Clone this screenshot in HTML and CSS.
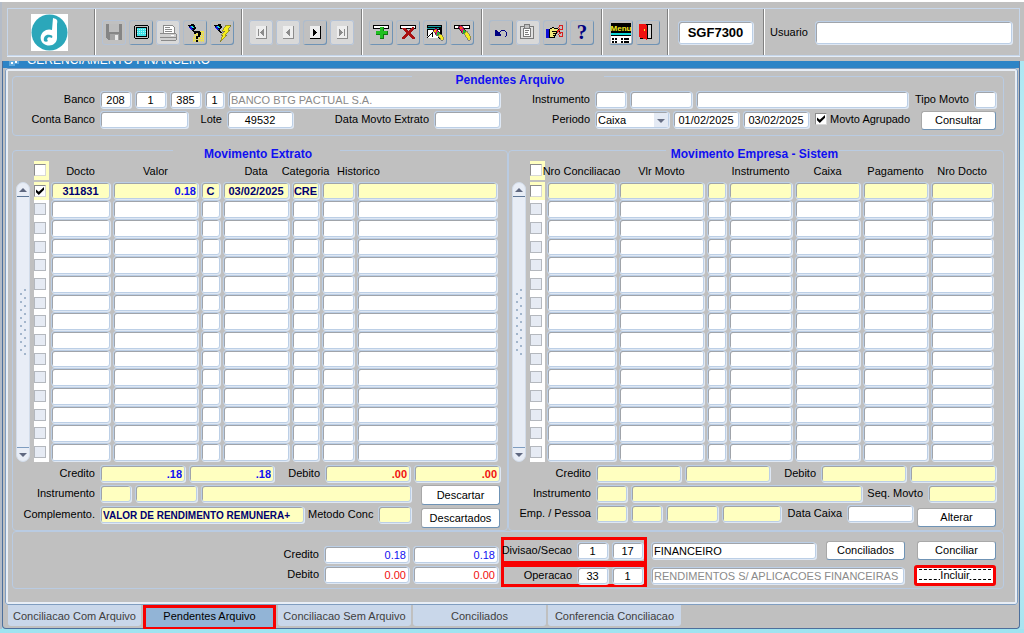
FILE: index.html
```html
<!DOCTYPE html>
<html lang="pt-BR">
<head>
    <meta charset="utf-8">
    <title>SGF7300 - Gerenciamento Financeiro</title>
    <link rel="stylesheet" href="styles.css">
</head>
<body>
    <header class="toolbar">
        <div class="toolbar-frame">
            <div class="section logo-section">
                <svg class="logo" viewBox="0 0 37 37">
                    <rect width="37" height="37" fill="#fff"/>
                    <circle cx="18.5" cy="18.5" r="18" fill="#2ba7ba"/>
                    <path d="M22 4 C26 5 27 6 26 10 V24 C26 29 21 33 15 31 C9 29 8 22 12 18 C15 15 19 15 21 16 Z" fill="#fff"/>
                    <path d="M19 21 C15 20 12 23 13 27 C14 28 16 28 17 27 C15 25 17 22 21 24 C22 22 21 21 19 21 Z" fill="#2ba7ba"/>
                </svg>
            </div>

            <div class="section">
                <button class="tool off" aria-label="Salvar">
                    <svg viewBox="0 0 24 24">
                        <path d="M4 4H20V20H6L4 18Z" fill="#858585"/>
                        <path d="M7 4H17V12H7Z" fill="#bdbdbd"/>
                        <path d="M8 14H17V20H8Z" fill="#a4a4a4"/>
                        <path d="M13 15H16V20H13Z" fill="#e8e8e8"/>
                    </svg>
                </button>
                <button class="tool" aria-label="Tela">
                    <svg viewBox="0 0 24 24">
                        <path d="M5 6H6V5H19V6H20V18H19V19H6V18H5Z" fill="#000"/>
                        <path d="M6 6H19V18H6Z" fill="#c0c0c0"/>
                        <path d="M7 7H18V17H7Z" fill="#000"/>
                        <path d="M8 8H17V16H8Z" fill="#3fe0e6"/>
                        <path d="M8 9.5H17M8 11.5H17M8 13.5H17" stroke="#b0f4f6" stroke-dasharray="1 1"/>
                    </svg>
                </button>
                <button class="tool off lit" aria-label="Imprimir">
                    <svg viewBox="0 0 24 24">
                        <path d="M7 5H16L18 7V13H7Z" fill="#fff" stroke="#8a8a8a"/>
                        <path d="M9 7.5H14M9 9.5H16M9 11.5H16" stroke="#8a8a8a"/>
                        <path d="M4 14H20V20H4Z" fill="#d0d0d0"/>
                        <path d="M4 13.5H20M4 17.5H20M5 20.5H20M20.5 14V20" stroke="#8a8a8a"/>
                        <path d="M15 15H18V16H15Z" fill="#fff"/>
                    </svg>
                </button>
                <button class="tool" aria-label="Consulta">
                    <svg viewBox="0 0 24 24">
                        <path d="M11 11H21V22H10V17H11Z" fill="#ece050"/>
                        <path d="M11 13H21M11 15H21M11 17H21M11 19H21M11 21H21" stroke="#c0c0c0" stroke-dasharray="1 1"/>
                        <path d="M5 5L11 4L13 8L11 11L13 13H11L8 10Z" fill="#000"/>
                        <path d="M5 7L8 6L10 10L8 10Z" fill="#1212e0"/>
                        <path d="M8 6H10L11 8H9Z" fill="#20e0e0"/>
                        <path d="M12 11H17V12H18V15H17V17H15V19H13V16H15V13H13V14H11V12H12Z" fill="#000"/>
                        <path d="M13 20H15V22H13Z" fill="#000"/>
                    </svg>
                </button>
                <button class="tool" aria-label="Executar consulta">
                    <svg viewBox="0 0 24 24">
                        <path d="M4 5L11 4L12 7L10 10L12 13H10L7 10Z" fill="#000"/>
                        <path d="M4 7L7 6L9 10L7 10Z" fill="#1212e0"/>
                        <path d="M7 6H9L10 8H8Z" fill="#20e0e0"/>
                        <path d="M16 5H21L18 10H20L15 15H17L10 22L13 15H11L15 11H12Z" fill="#f6ee1c" stroke="#6b6420" stroke-width=".6"/>
                    </svg>
                </button>
            </div>

            <div class="section">
                <button class="tool off lit" aria-label="Primeiro">
                    <svg viewBox="0 0 24 24">
                        <path d="M7 6H18V19H7Z" fill="#eee"/><path d="M7 18.5H18M17.5 6V19" stroke="#8c8c8c"/>
                        <path d="M9 9H10V16H9ZM15 9V16H14L11 12.5L14 9Z" fill="#8c8c8c"/>
                    </svg>
                </button>
                <button class="tool off lit" aria-label="Anterior">
                    <svg viewBox="0 0 24 24">
                        <path d="M7 6H18V19H7Z" fill="#eee"/><path d="M7 18.5H18M17.5 6V19" stroke="#8c8c8c"/>
                        <path d="M14 9V16H13L10 12.5L13 9Z" fill="#8c8c8c"/>
                    </svg>
                </button>
                <button class="tool" aria-label="Proximo">
                    <svg viewBox="0 0 24 24">
                        <path d="M7 6H18V19H7Z" fill="#eee"/><path d="M7 18.5H18M17.5 6V19" stroke="#000"/>
                        <path d="M10 9V16H11L14 12.5L11 9Z" fill="#000"/>
                    </svg>
                </button>
                <button class="tool off lit" aria-label="Ultimo">
                    <svg viewBox="0 0 24 24">
                        <path d="M7 6H18V19H7Z" fill="#eee"/><path d="M7 18.5H18M17.5 6V19" stroke="#8c8c8c"/>
                        <path d="M9 9V16H10L13 12.5L10 9ZM14 9H15V16H14Z" fill="#8c8c8c"/>
                    </svg>
                </button>
            </div>

            <div class="section">
                <button class="tool" aria-label="Inserir">
                    <svg viewBox="0 0 24 24">
                        <path d="M4.5 5.5H19.5V8.5H4.5Z" fill="#fff" stroke="#000"/>
                        <path d="M11 7H15V11H19V15H15V19H11V15H7V11H11Z" fill="#107a10"/>
                        <path d="M11 7H14V11H18V14H14V18H11V14H7V11H11Z" fill="#1fc01f"/>
                    </svg>
                </button>
                <button class="tool" aria-label="Remover">
                    <svg viewBox="0 0 24 24">
                        <path d="M4.5 5.5H19.5V8.5H4.5Z" fill="#fff" stroke="#000"/>
                        <path d="M6 8H9L12 11L16 7H18V9L14 13L19 18V19H16L12 15L8 19H6V17L10 13L6 9Z" fill="#a81010"/>
                    </svg>
                </button>
                <button class="tool" aria-label="Limpar bloco">
                    <svg viewBox="0 0 24 24">
                        <path d="M4 5H19V16H4Z" fill="#000"/>
                        <path d="M5 6H18V7H5ZM4 8H16V9H4Z" fill="#1a9aa0"/>
                        <path d="M5 10H17V18H5Z" fill="#fff"/>
                        <path d="M4 18L9 13V17M15 17L18 19" fill="none" stroke="#000"/>
                        <path d="M10 10L13 8L17 13L14 16Z" fill="#e0206a" stroke="#000" stroke-width=".6"/>
                        <path d="M11 10H13V12H11Z" fill="#ffb000"/>
                        <path d="M14 12L17 13L14 16Z" fill="#18c030"/>
                        <path d="M15 15L18 14L21 18L20 20H18Z" fill="#f4ec20" stroke="#555" stroke-width=".6"/>
                    </svg>
                </button>
                <button class="tool" aria-label="Limpar registro">
                    <svg viewBox="0 0 24 24">
                        <path d="M4.5 5.5H19.5V8.5H4.5Z" fill="#fff" stroke="#000"/>
                        <path d="M8 7L11 5L16 11L13 14Z" fill="#e0206a" stroke="#000" stroke-width=".6"/>
                        <path d="M10 7H12V9H10Z" fill="#ff5010"/>
                        <path d="M13 10L16 11L13 14Z" fill="#18c030"/>
                        <path d="M14 13L17 11L21 17L20 20H18Z" fill="#f4ec20" stroke="#555" stroke-width=".6"/>
                    </svg>
                </button>
            </div>

            <div class="section">
                <button class="tool" aria-label="Desfazer">
                    <svg viewBox="0 0 24 24">
                        <path d="M6 10H7L9 12L12 15V16H6Z" fill="#000080"/>
                        <path d="M9 13.5L12.5 10.5H15.5L17.5 12.5V15.5L16 17" fill="none" stroke="#000080"/>
                    </svg>
                </button>
                <button class="tool off lit" aria-label="Colar">
                    <svg viewBox="0 0 24 24">
                        <path d="M4.5 6.5H17.5V18.5H4.5Z" fill="#e0e0e0" stroke="#7c7c7c"/>
                        <path d="M8.5 4.5H13.5V8.5H8.5Z" fill="#c0c0c0" stroke="#7c7c7c"/>
                        <path d="M7.5 8.5H14.5V16.5H7.5Z" fill="#fff" stroke="#7c7c7c"/>
                        <path d="M9 10.5H13M9 12.5H12M9 14.5H13" stroke="#7c7c7c"/>
                    </svg>
                </button>
                <button class="tool" aria-label="Recortar">
                    <svg viewBox="0 0 24 24">
                        <path d="M3 9H6V18H3Z" fill="#1010d8"/>
                        <path d="M6.5 9.5L9.5 7.500L16.500 9.500V11.5H13.5V13.5H12.5V15.5H11.5V17.5H6.5Z" fill="#f2e87a" stroke="#000"/>
                        <path d="M9 11.5H14M10 13.5H13M10 15.5H12" stroke="#000"/>
                        <path d="M14 12.5L18 9M14 10.5L18 14" stroke="#d82020"/>
                        <circle cx="18" cy="7.5" r="2" fill="none" stroke="#d82020"/>
                        <circle cx="18" cy="14.5" r="2" fill="none" stroke="#d82020"/>
                    </svg>
                </button>
                <button class="tool" aria-label="Ajuda">
                    <svg viewBox="0 0 24 24"><text class="help" x="12" y="19" text-anchor="middle">?</text></svg>
                </button>
            </div>

            <div class="section">
                <button class="tool" aria-label="Menu">
                    <svg viewBox="0 0 24 24">
                        <path d="M2 3H22V12H2Z" fill="#000"/>
                        <path d="M2 12H22V23H2Z" fill="#fff"/>
                        <path d="M2 13H22V15H2Z" fill="#10d8d8"/>
                        <path d="M2 12.5H22M2 15.5H22" stroke="#000"/>
                        <path d="M3 18.5H9M3 21.5H9" stroke="#000" stroke-width="2" stroke-dasharray="2 1"/>
                        <path d="M12 18.5H14M15 18.500H20M12 21.5H14M15 21.5H20" stroke="#000" stroke-width="2"/>
                        <text class="menu" x="12" y="11" text-anchor="middle">Menu</text>
                    </svg>
                </button>
                <button class="tool" aria-label="Sair">
                    <svg viewBox="0 0 24 24">
                        <path d="M4.5 4.5H15.5V18.5H4.5Z" fill="#d8d8d8" stroke="#000"/>
                        <path d="M3 4H10L11 6V20L3 17Z" fill="#f01010"/>
                        <path d="M11.5 5V19" stroke="#000"/>
                        <path d="M8 9H9V11H8Z" fill="#fff020"/>
                    </svg>
                </button>
            </div>

            <div class="section program">
                <input class="program-code" value="SGF7300" aria-label="Programa">
            </div>

            <div class="section user">
                <label for="usuario">Usuario</label>
                <input class="user-name" id="usuario">
            </div>
        </div>
    </header>

    <main class="window">
        <div class="titlebar">
            <svg class="title-icon" viewBox="0 0 12 7"><path d="M1 0H11V3H7V5H1Z" fill="#5fa8dc"/><path d="M3 1H5V3H3ZM7 0H9V2H7Z" fill="#fff"/></svg>
            <h1>GERENCIAMENTO FINANCEIRO</h1>
        </div>

        <div class="canvas">
            <fieldset class="filters">
                <legend>Pendentes Arquivo</legend>
                <div class="half left">
                    <div class="row">
                        <label class="w83" for="banco">Banco</label>
                        <input class="w31 center" id="banco" value="208">
                        <input class="w31 center" value="1" aria-label="Agencia">
                        <input class="w31 center" value="385" aria-label="Conta">
                        <input class="w19 center" value="1" aria-label="Digito">
                        <input class="grow faded" value="BANCO BTG PACTUAL S.A." aria-label="Nome do banco">
                    </div>
                    <div class="row">
                        <label class="w83" for="conta-banco">Conta Banco</label>
                        <input class="w88" id="conta-banco">
                        <label class="w31" for="lote">Lote</label>
                        <input class="w66 center" id="lote" value="49532">
                        <label class="grow" for="data-extrato">Data Movto Extrato</label>
                        <input class="w66" id="data-extrato">
                    </div>
                </div>
                <div class="half right">
                    <div class="row">
                        <label class="w83" for="instrumento">Instrumento</label>
                        <input class="w31" id="instrumento">
                        <input class="w62" aria-label="Sigla do instrumento">
                        <input class="grow" aria-label="Nome do instrumento">
                        <label class="w58" for="tipo">Tipo Movto</label>
                        <input class="w22" id="tipo">
                    </div>
                    <div class="row">
                        <label class="w83" for="periodo">Periodo</label>
                        <div class="select">
                            <select id="periodo"><option>Caixa</option></select>
                        </div>
                        <input class="w66 center" value="01/02/2025" aria-label="Data inicial">
                        <input class="w66 center" value="03/02/2025" aria-label="Data final">
                        <label class="check-label"><input type="checkbox" checked>Movto Agrupado</label>
                        <button class="btn narrow">Consultar</button>
                    </div>
                </div>
            </fieldset>

            <div class="movements">
                <fieldset class="movement extrato">
                    <legend>Movimento Extrato</legend>
                    <div class="grid-area">
                        <div class="scrollbar"><span class="arrow up"></span><span class="grip"></span><span class="arrow down"></span></div>
                        <table>
                            <colgroup><col class="w17"><col class="w62"><col class="w88"><col class="w22"><col class="w69"><col class="w30"><col class="w35"><col></colgroup>
                            <thead>
                                <tr>
                                    <th class="pick"><input type="checkbox" aria-label="Marcar todos"></th>
                                    <th><span>Docto</span></th>
                                    <th><span>Valor</span></th>
                                    <th></th>
                                    <th><span>Data</span></th>
                                    <th><span>Categoria</span></th>
                                    <th colspan="2" class="start"><span>Historico</span></th>
                                </tr>
                            </thead>
                            <tbody id="extrato"></tbody>
                        </table>
                    </div>
                    <div class="details">
                        <div class="row">
                            <label class="w83" for="cred">Credito</label>
                            <input class="w85 yellow num blue" id="cred" value=".18">
                            <input class="w85 yellow num blue" value=".18" aria-label="Credito total">
                            <label class="w43" for="deb">Debito</label>
                            <input class="w85 yellow num red" id="deb" value=".00">
                            <input class="grow yellow num red" value=".00" aria-label="Debito total">
                        </div>
                        <div class="with-buttons">
                            <div class="stack">
                                <div class="row">
                                    <label class="w83" for="instr-ext">Instrumento</label>
                                    <input class="w31 yellow" id="instr-ext">
                                    <input class="w62 yellow" aria-label="Sigla">
                                    <input class="grow yellow" aria-label="Descricao">
                                </div>
                                <div class="row">
                                    <label class="w83" for="compl">Complemento.</label>
                                    <input class="w204 yellow complement" id="compl" value="VALOR DE RENDIMENTO REMUNERA+">
                                    <label class="w66" for="metodo">Metodo Conc</label>
                                    <input class="grow yellow" id="metodo">
                                </div>
                            </div>
                            <div class="buttons">
                                <button class="btn">Descartar</button>
                                <button class="btn">Descartados</button>
                            </div>
                        </div>
                    </div>
                </fieldset>

                <fieldset class="movement empresa">
                    <legend>Movimento Empresa - Sistem</legend>
                    <div class="grid-area">
                        <div class="scrollbar"><span class="arrow up"></span><span class="grip"></span><span class="arrow down"></span></div>
                        <table>
                            <colgroup><col class="w17"><col class="w72"><col class="w88"><col class="w22"><col class="w66"><col class="w68"><col class="w68"><col></colgroup>
                            <thead>
                                <tr>
                                    <th class="pick"><input type="checkbox" aria-label="Marcar todos"></th>
                                    <th><span>Nro Conciliacao</span></th>
                                    <th><span>Vlr Movto</span></th>
                                    <th></th>
                                    <th><span>Instrumento</span></th>
                                    <th><span>Caixa</span></th>
                                    <th><span>Pagamento</span></th>
                                    <th><span>Nro Docto</span></th>
                                </tr>
                            </thead>
                            <tbody id="empresa"></tbody>
                        </table>
                    </div>
                    <div class="details">
                        <div class="row">
                            <label class="w83" for="cred-emp">Credito</label>
                            <input class="w85 yellow" id="cred-emp">
                            <input class="w85 yellow" aria-label="Credito total">
                            <label class="w43" for="deb-emp">Debito</label>
                            <input class="w85 yellow" id="deb-emp">
                            <input class="grow yellow" aria-label="Debito total">
                        </div>
                        <div class="row">
                            <label class="w83" for="instr-emp">Instrumento</label>
                            <input class="w31 yellow" id="instr-emp">
                            <input class="grow yellow" aria-label="Descricao">
                            <label class="w58" for="seq">Seq. Movto</label>
                            <input class="w68 yellow" id="seq">
                        </div>
                        <div class="row">
                            <label class="w83" for="emp">Emp. / Pessoa</label>
                            <input class="w31 yellow" id="emp">
                            <input class="w31 yellow" aria-label="Filial">
                            <input class="w52 yellow" aria-label="Pessoa">
                            <input class="grow yellow" aria-label="Nome">
                            <label class="w58" for="data-caixa">Data Caixa</label>
                            <input class="w66" id="data-caixa">
                            <button class="btn low">Alterar</button>
                        </div>
                    </div>
                </fieldset>
            </div>

            <fieldset class="footer-box">
                <div class="totals">
                    <div class="row">
                        <label class="grow" for="tot-cred">Credito</label>
                        <input class="w85 num plain blue" id="tot-cred" value="0.18">
                        <input class="w85 num plain blue" value="0.18" aria-label="Credito geral">
                    </div>
                    <div class="row">
                        <label class="grow" for="tot-deb">Debito</label>
                        <input class="w85 num plain red" id="tot-deb" value="0.00">
                        <input class="w85 num plain red" value="0.00" aria-label="Debito geral">
                    </div>
                </div>
                <div class="operation">
                    <div class="op-row first">
                        <div class="marked">
                            <label for="divisao">Divisao/Secao</label>
                            <input class="w31 center" id="divisao" value="1">
                            <input class="w31 center" value="17" aria-label="Secao">
                        </div>
                        <input class="grow" value="FINANCEIRO" aria-label="Nome da secao">
                        <button class="btn spaced">Conciliados</button>
                        <button class="btn">Conciliar</button>
                    </div>
                    <div class="op-row">
                        <div class="marked">
                            <label for="operacao">Operacao</label>
                            <input class="w31 center" id="operacao" value="33">
                            <input class="w31 center" value="1" aria-label="Suboperacao">
                        </div>
                        <input class="grow faded" value="RENDIMENTOS S/ APLICACOES FINANCEIRAS" aria-label="Nome da operacao">
                        <button class="btn focused"><span>Incluir</span></button>
                    </div>
                </div>
            </fieldset>
        </div>

        <nav class="tabs">
            <button>Conciliacao Com Arquivo</button>
            <button class="active">Pendentes Arquivo</button>
            <button>Conciliacao Sem Arquivo</button>
            <button>Conciliados</button>
            <button>Conferencia Conciliacao</button>
        </nav>
    </main>

    <script>
        const ROWS = 15;

        // values of the first record in each block, the rest is empty
        const extrato = ['311831', '0.18', 'C', '03/02/2025', 'CRE', '', ''];
        const empresa = ['', '', '', '', '', '', ''];

        function fillTable(id, first, checked) {
            const body = document.getElementById(id);
            for (let r = 0; r < ROWS; r++) {
                const tr = document.createElement('tr');
                const pick = document.createElement('td');
                const box = document.createElement('input');
                pick.className = 'pick';
                box.type = 'checkbox';
                box.disabled = r > 0;
                box.checked = r === 0 && checked;
                box.setAttribute('aria-label', 'Registro ' + (r + 1));
                pick.appendChild(box);
                tr.appendChild(pick);

                first.forEach((value, c) => {
                    const td = document.createElement('td');
                    const input = document.createElement('input');
                    input.value = r === 0 ? value : '';
                    input.setAttribute('aria-label', 'Linha ' + (r + 1) + ' coluna ' + (c + 1));
                    td.appendChild(input);
                    tr.appendChild(td);
                });
                body.appendChild(tr);
            }
        }

        fillTable('extrato', extrato, true);
        fillTable('empresa', empresa, false);
    </script>
</body>
</html>
```
FILE: styles.css
```css
* {
    box-sizing: border-box;
}

body {
    margin: 0;
    border-top: 2px solid #fff;
    background:
        linear-gradient(#b4bcc8, #b4bcc8) no-repeat 0 0 / 2px 100%,
        linear-gradient(#9fe3f0, #dff6fa 50%, #a9e4f0);
    font: 11px/14px "Liberation Sans", Arial, sans-serif;
    color: #000;
}

input, select, button {
    font: inherit;
    color: inherit;
    margin: 0;
}

fieldset {
    min-width: 0;
    margin: 0;
    padding: 0;
    border: 1px solid #b9cbe2;
    border-radius: 4px;
}

legend {
    height: 6px;
    margin: 0 auto;
    padding: 0 1px 0 5px;
    font-size: 12px;
    font-weight: bold;
    color: #1010f0;
    white-space: nowrap;
}

label {
    flex: none;
    padding-right: 1px;
    text-align: right;
    line-height: 17px;
    white-space: nowrap;
}

/* Fields */
input:not([type="checkbox"]), select {
    flex: none;
    min-width: 0;
    height: 17px;
    padding: 1px 2px 0;
    border: 1px solid #bccfe6;
    border-radius: 3px;
    background: #fff;
    box-shadow: inset 1px 1px 0 #a0a4aa, 1px 1px 0 #dfe8f4;
    outline: none;
}

input.yellow:not([type="checkbox"]) { background: #ffffc0; }
input.center { text-align: center; }
input.faded { color: #8a8a8a; }
input.num { text-align: right; font-weight: bold; }
input.plain { font-weight: normal; }
input.blue { color: #1010f0; }
input.red { color: #f01010; }

input.complement {
    font-size: 10px;
    font-weight: bold;
    color: #000070;
}

input[type="checkbox"] {
    appearance: none;
    display: block;
    width: 12px;
    height: 12px;
    border: 1px solid;
    border-color: #8c8c8c #d8d8d8 #d8d8d8 #8c8c8c;
    background: #fff;
}

input[type="checkbox"]:disabled {
    background: #e6ebf4;
    border-color: #b4b8be;
}

input[type="checkbox"]:checked::before {
    content: "";
    display: block;
    width: 8px;
    height: 8px;
    margin: 1px;
    background: #000;
    clip-path: polygon(0 30%, 35% 60%, 100% 0, 100% 35%, 35% 100%, 0 65%);
}

.w17 { width: 17px; }
.w19 { width: 19px; }
.w22 { width: 22px; }
.w30 { width: 30px; }
.w31 { width: 31px; }
.w35 { width: 35px; }
.w43 { width: 43px; }
.w52 { width: 52px; }
.w58 { width: 58px; }
.w62 { width: 62px; }
.w66 { width: 66px; }
.w68 { width: 68px; }
.w69 { width: 69px; }
.w72 { width: 72px; }
.w83 { width: 83px; }
.w85 { width: 85px; }
.w88 { width: 88px; }
.w204 { width: 204px; }

input.grow:not([type="checkbox"]), label.grow {
    flex: 1;
    width: 0;
}

.row {
    display: flex;
    gap: 4px;
    height: 17px;
}

.btn {
    flex: none;
    width: 79px;
    height: 19px;
    padding: 0;
    border: 1px solid;
    border-color: #a8a8a8 #6f93b5 #6f93b5 #a8a8a8;
    border-radius: 3px;
    background: #fff;
    line-height: 17px;
}

.btn.narrow {
    width: 75px;
    margin-left: auto;
}

/* Toolbar */
.toolbar {
    margin-left: 2px;
    padding: 6px 4px 5px 5px;
    background: #c0c0c0;
}

.toolbar-frame {
    display: flex;
    height: 48px;
    border: 1px solid #c6d6ea;
    box-shadow: 0 1px 0 #e4ecf6;
}

.section {
    display: flex;
    align-items: center;
    gap: 3px;
    flex: none;
    padding: 0 7px;
    border-right: 1px solid #808080;
    box-shadow: 1px 0 0 #fff;
}

.section.logo-section {
    width: 87px;
    padding: 0 4px 0 0;
    justify-content: center;
}

.logo {
    width: 37px;
    height: 37px;
}

.section.program { padding: 0 10px; }

.section.user {
    flex: 1;
    gap: 6px;
    padding-left: 6px;
    border-right: 0;
    box-shadow: none;
}

input.program-code:not([type="checkbox"]) {
    width: 75px;
    height: 23px;
    font-size: 13px;
    font-weight: bold;
    text-align: center;
}

input.user-name:not([type="checkbox"]) {
    flex: 1;
    height: 23px;
}

.tool {
    width: 24px;
    height: 25px;
    padding: 0;
    border: 0;
    border-radius: 3px;
    background: transparent;
    box-shadow: inset 1px 1px 0 #aebccc, inset -1px -1px 0 #6f93b5;
}

.tool.off { box-shadow: inset 0 0 0 1px #b4c2d6; }
.tool.lit { background: #d9d9d9; }

.tool svg {
    display: block;
    width: 24px;
    height: 24px;
    shape-rendering: crispEdges;
}

.help {
    font: bold 21px "Liberation Serif", serif;
    fill: #000080;
}

.menu {
    font: bold 8px "Liberation Sans", sans-serif;
    fill: #f4ec20;
}

/* Window */
.window {
    margin: 0 4px 0 2px;
    border: solid #4d6f9c;
    border-width: 0 1px 1px;
    border-radius: 0 0 4px 4px;
    background: #c0c0c0;
}

.titlebar {
    display: flex;
    align-items: flex-start;
    gap: 7px;
    height: 7px;
    padding-left: 5px;
    background: #2d84c6;
    overflow: hidden;
}

.title-icon {
    flex: none;
    width: 12px;
    height: 7px;
}

.titlebar h1 {
    align-self: flex-end;
    margin: 0;
    font-size: 12px;
    font-weight: normal;
    line-height: 16px;
    color: #fff;
}

.canvas {
    margin: 0 1px 0 2px;
    padding: 2px 11px 13px 4px;
    border: 3px solid #e8eef6;
    border-radius: 3px;
    outline: 1px solid #7f9dc0;
    outline-offset: -1px;
}

.filters {
    display: grid;
    grid-template-columns: 1fr 1fr;
    padding: 12px 0 4px;
}

.filters legend { padding: 0 40px 0 44px; }

.half {
    display: flex;
    flex-direction: column;
    gap: 3px;
    height: 40px;
}

.half.left { padding-right: 8px; }
.half.right { padding-right: 7px; }

.select {
    position: relative;
    width: 74px;
}

.select select {
    appearance: none;
    display: block;
    width: 100%;
}

.select::after {
    content: "";
    position: absolute;
    top: 2px;
    right: 1px;
    width: 14px;
    height: 14px;
    background: #e4eaf4;
    pointer-events: none;
}

.select::before {
    content: "";
    position: absolute;
    top: 8px;
    right: 4px;
    z-index: 1;
    border: 4px solid transparent;
    border-top-color: #666e84;
    border-bottom: 0;
    pointer-events: none;
}

.check-label {
    display: flex;
    gap: 3px;
    padding-left: 2px;
}

.check-label input[type="checkbox"] { margin-top: 2px; }

/* Movement blocks */
.movements {
    display: grid;
    grid-template-columns: 1fr 1fr;
    margin-top: 11px;
}

.movement { padding: 8px 7px 2px 0; }
.extrato legend { padding: 0 28px 0 31px; }

.grid-area {
    display: flex;
    gap: 4px;
    padding-left: 3px;
}

.scrollbar {
    display: flex;
    flex-direction: column;
    justify-content: space-between;
    align-items: center;
    flex: none;
    width: 14px;
    margin-top: 21px;
    border: 1px solid #d2dcea;
    border-radius: 7px;
    background: #e8edf6;
}

.arrow {
    display: flex;
    align-items: center;
    justify-content: center;
    width: 12px;
    height: 14px;
}

.arrow.up { border-bottom: 1px solid #5f7898; }
.arrow.down { border-top: 1px solid #7f9dc0; }

.arrow::before {
    content: "";
    border: 4px solid transparent;
}

.arrow.up::before { border-top: 0; border-bottom-color: #5f6880; }
.arrow.down::before { border-bottom: 0; border-top-color: #5f6880; }

.grip {
    width: 8px;
    height: 68px;
    background:
        radial-gradient(circle at 2px 6px, #a3b6cc 1px, transparent 1px) 0 0 / 8px 8px,
        radial-gradient(circle at 6px 2px, #a3b6cc 1px, transparent 1px) 0 0 / 8px 8px;
}

table {
    flex: 1;
    width: 0;
    table-layout: fixed;
    border-collapse: separate;
    border-spacing: 0;
}

th, td {
    padding: 0 3px 0 0;
    font-weight: normal;
    vertical-align: top;
}

th {
    height: 21px;
    line-height: 20px;
    white-space: nowrap;
}

th span {
    display: flex;
    justify-content: center;
}

th.start span {
    justify-content: flex-start;
    padding-left: 15px;
}

.pick {
    padding: 0;
    border-right: 2px solid #c0c0c0;
    background: #fff;
}

th.pick {
    padding-top: 3px;
    border-bottom: 2px solid #c0c0c0;
}

td.pick { padding-top: 3px; }

th.pick, tr:first-child .pick { background: #ffffc0; }

tbody tr { height: 19px; }
tbody tr:nth-child(3n+1) { height: 18px; }

td input:not([type="checkbox"]) {
    display: block;
    width: 100%;
    height: 18px;
    font-weight: bold;
    color: #000070;
    text-align: center;
}

tbody tr:nth-child(3n+1) input:not([type="checkbox"]) { height: 17px; }

tbody tr:first-child input:not([type="checkbox"]) { background: #ffffc0; }

#extrato td:nth-child(3) input {
    padding-right: 1px;
    text-align: right;
    color: #1010f0;
}

#extrato td:nth-child(6) input { padding: 1px 0 0; }

.details {
    display: flex;
    flex-direction: column;
    gap: 3px;
    margin-top: 3px;
}

.with-buttons {
    display: flex;
    gap: 10px;
}

.stack {
    flex: 1;
    display: flex;
    flex-direction: column;
    gap: 4px;
}

.buttons {
    display: flex;
    flex-direction: column;
    gap: 3px;
}

.buttons .btn { height: 20px; }

.btn.low { margin-top: 3px; }

/* Totals and operation */
.footer-box {
    display: grid;
    grid-template-columns: 487fr 503fr;
    padding: 5px 0 1px;
}

.totals {
    display: flex;
    flex-direction: column;
    gap: 3px;
    padding: 9px 2px 0 0;
}

.operation { padding: 0 7px 0 1px; }

.op-row {
    display: flex;
    align-items: center;
    gap: 4px;
    height: 23px;
}

.op-row.first { height: 27px; }

.marked {
    display: flex;
    align-items: center;
    justify-content: flex-end;
    gap: 4px;
    align-self: stretch;
    width: 146px;
    padding-right: 1px;
    border: 3px solid #f80000;
}

.btn.spaced { margin: 0 8px 0 6px; }

.btn.focused {
    position: relative;
    width: 82px;
    height: 21px;
    margin-left: 6px;
    border: 3px solid #f80000;
    line-height: 15px;
}

.btn.focused::before {
    content: "";
    position: absolute;
    inset: 1px 2px 3px;
    border: dashed #000;
    border-width: 1px 0;
}

.btn.focused span {
    position: relative;
    background: linear-gradient(#fff, #fff) no-repeat bottom / 100% 4px;
}

/* Tabs */
.tabs {
    display: flex;
    gap: 2px;
    height: 23px;
    padding-left: 5px;
}

.tabs button {
    width: 133px;
    height: 21px;
    padding: 0;
    border: 0;
    border-radius: 0 0 3px 3px;
    background: #c9d7ea;
    color: #404040;
}

.tabs .active {
    height: 25px;
    padding-bottom: 3px;
    border: 3px solid #f80000;
    border-radius: 0;
    background: #92b4d6;
    color: #000;
}
```
